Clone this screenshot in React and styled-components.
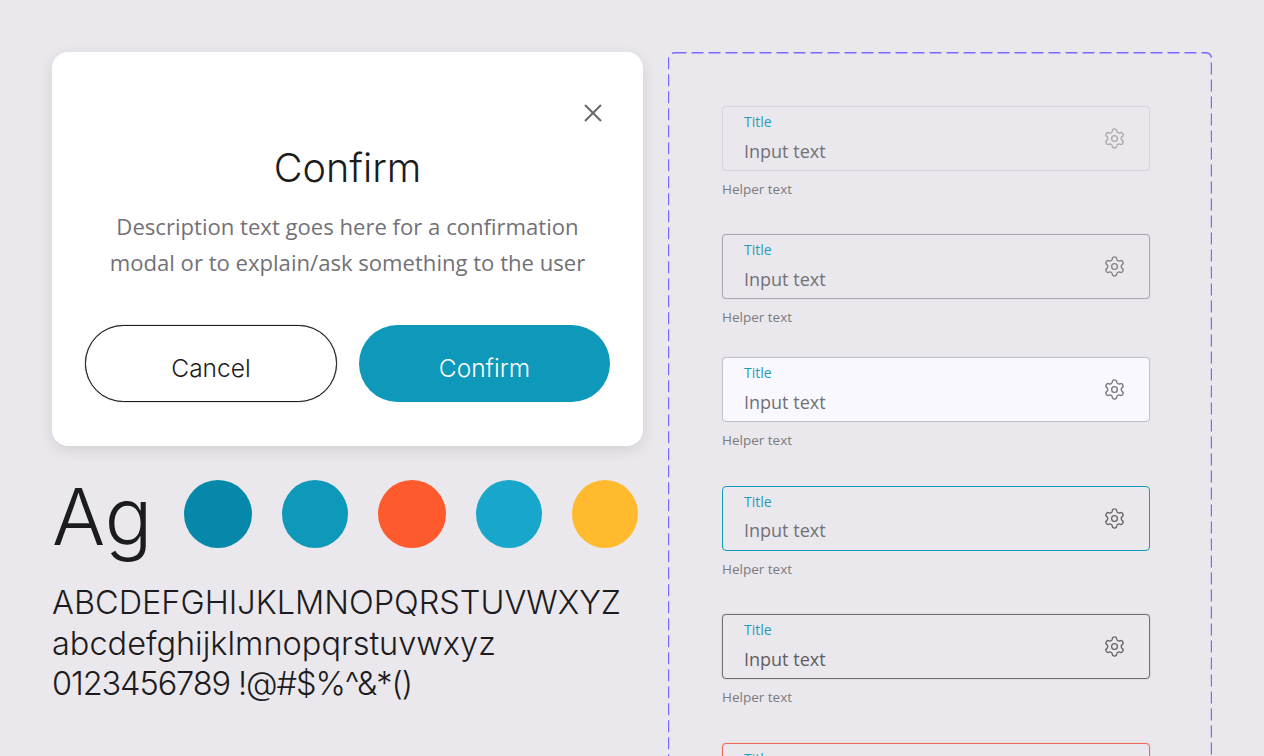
import React from 'react';
import styled, { createGlobalStyle } from 'styled-components';
import { Settings } from 'lucide-react';

const Global = createGlobalStyle`
  html, body { margin: 0; padding: 0; height: 756px; overflow: hidden; background: #eae8ec; }
  * { box-sizing: border-box; }
`;
const Page = styled.div`
  width: 1264px; height: 756px; overflow: hidden; background: #eae8ec;
  display: flex; gap: 25px; padding: 52px 52px 0;
  font-family: "Open Sans", sans-serif;
`;
const LeftColumn = styled.div`width: 591px; flex: none; display: flex; flex-direction: column;`;
const Modal = styled.section`
  height: 394px; background: #fff; border-radius: 16px;
  box-shadow: 0 4px 14px rgba(40, 40, 50, 0.12);
  padding: 50px 33px 0; display: flex; flex-direction: column; align-items: center;
`;
const CloseRow = styled.div`align-self: stretch; height: 22px; display: flex; justify-content: flex-end; padding-right: 6px;`;
const CloseIcon = styled.svg`width: 22px; height: 22px; color: #68676c;`;
const Heading = styled.h1`
  margin: 20px 0 0; font: 300 39.6px/48px Inter, sans-serif; color: #1c1b20;
`;
const Description = styled.p`
  margin: 16px 0 0; font-size: 22.1px; line-height: 36px; color: #727176; text-align: center; white-space: nowrap;
`;
const Actions = styled.div`margin-top: 45px; display: flex; gap: 22px; align-self: stretch;`;
const PillButton = styled.button`
  width: ${p => p.$w}px; height: 77px; border-radius: 39px; padding: 9px 0 0;
  font: 300 24.5px/1 Inter, sans-serif; cursor: pointer;
  border: ${p => (p.$primary ? 'none' : '1px solid #1c1b20')};
  box-shadow: ${p => (p.$primary ? 'none' : '0 0 1px #1c1b20')};
  background: ${p => (p.$primary ? '#0e98ba' : '#fff')};
  color: ${p => (p.$primary ? '#fff' : '#1c1b20')};
`;
const SampleRow = styled.div`margin-top: 34px; height: 68px; display: flex; align-items: center;`;
const Sample = styled.div`
  width: 132px; flex: none; font: 300 79px/68px Inter, sans-serif; color: #1c1b20; padding-top: 4px;
`;
const Swatches = styled.div`display: flex; gap: 30px;`;
const Swatch = styled.div`width: ${p => p.$w}px; height: 68px; border-radius: 50%; background: ${p => p.$c};`;
const Glyphs = styled.div`
  margin-top: 35px; font: 300 32.5px/40.5px Inter, sans-serif; color: #1c1b20; white-space: nowrap;
`;
const GlyphLine = styled.div`letter-spacing: ${p => p.$track || 0}px;`;
const FormPanel = styled.div`
  position: relative; width: 544px; height: 760px; flex: none;
  padding: 54px 62px 0 54px; overflow: hidden;
`;
const DashedFrame = styled.svg`position: absolute; left: 0; top: 0; width: 544px; height: 800px; pointer-events: none;`;
const FieldBlock = styled.div`margin-bottom: ${p => p.$mb}px;`;
const FieldBox = styled.div`
  height: 65px; border-radius: 4px; padding: 0 23px 0 21px;
  border: 1px solid ${p => p.$border};
  box-shadow: ${p => (p.$thick ? `0 0 1px ${p.$border}` : 'none')};
  background: ${p => p.$bg || 'transparent'};
  display: flex; align-items: center; justify-content: space-between;
`;
const FieldText = styled.div`display: flex; flex-direction: column; align-self: flex-start; padding-top: 6px;`;
const FieldLabel = styled.label`font-size: 14px; line-height: 18px; color: #1f9dbd;`;
const FieldValue = styled.span`font-size: 18px; line-height: 25px; margin-top: 7.5px; color: ${p => p.$c};`;
const Helper = styled.div`margin-top: 9px; font-size: 13.5px; line-height: 18px; color: #7b7a7f;`;

const fields = [
  { border: '#d6d6de', thick: true, icon: '#a9a8ac', text: '#727176', mb: 36 },
  { border: '#a9a8b0', thick: true, icon: '#828186', text: '#727176', mb: 31 },
  { border: '#c5c4cc', thick: true, bg: '#f9f8fe', icon: '#76757a', text: '#727176', mb: 36.5 },
  { border: '#0f9cbd', icon: '#66656a', text: '#727176', mb: 36.5 },
  { border: '#6f6e73', thick: true, icon: '#66656a', text: '#5f5e63', mb: 36.5 },
  { border: '#ef6a58', thick: true, icon: '#66656a', text: '#727176', mb: 36.5 },
];
const swatches = [[68, '#0688ab'], [66, '#0e98ba'], [68, '#ff5a2d'], [66, '#18a6cb'], [66, '#ffba2e']];

export default function App() {
  return (
    <Page>
      <Global />
      <LeftColumn>
        <Modal>
          <CloseRow>
            <CloseIcon viewBox="0 0 22 22" fill="none" stroke="currentColor" strokeWidth="2">
              <path d="M3 3L19 19M19 3L3 19" />
            </CloseIcon>
          </CloseRow>
          <Heading>Confirm</Heading>
          <Description>Description text goes here for a confirmation<br />modal or to explain/ask something to the user</Description>
          <Actions>
            <PillButton $w={252}>Cancel</PillButton>
            <PillButton $w={251} $primary>Confirm</PillButton>
          </Actions>
        </Modal>
        <SampleRow>
          <Sample>Ag</Sample>
          <Swatches>
            {swatches.map(([w, c]) => <Swatch key={c} $w={w} $c={c} />)}
          </Swatches>
        </SampleRow>
        <Glyphs>
          <GlyphLine>ABCDEFGHIJKLMNOPQRSTUVWXYZ</GlyphLine>
          <GlyphLine>abcdefghijklmnopqrstuvwxyz</GlyphLine>
          <GlyphLine $track={-1.1}>0123456789 !@#$%^&amp;*()</GlyphLine>
        </Glyphs>
      </LeftColumn>
      <FormPanel>
        <DashedFrame aria-hidden="true">
          <rect x="0.5" y="0.75" width="543" height="790" rx="6" fill="none" stroke="#7b68ff" strokeWidth="1.4" strokeDasharray="12 5" />
        </DashedFrame>
        {fields.map((f, i) => (
          <FieldBlock key={i} $mb={f.mb}>
            <FieldBox $border={f.border} $thick={f.thick} $bg={f.bg}>
              <FieldText>
                <FieldLabel>Title</FieldLabel>
                <FieldValue $c={f.text}>Input text</FieldValue>
              </FieldText>
              <Settings size={23} strokeWidth={1.4} color={f.icon} />
            </FieldBox>
            <Helper>Helper text</Helper>
          </FieldBlock>
        ))}
      </FormPanel>
    </Page>
  );
}
